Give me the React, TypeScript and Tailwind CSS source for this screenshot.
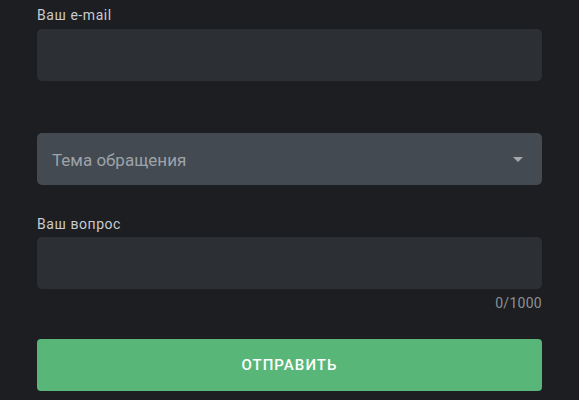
export default function App() {
  return (
    <div className="min-h-[400px] w-full bg-[#1d1e22] px-[37px] pt-[5px] font-['Roboto','Liberation_Sans',sans-serif] overflow-hidden">
      <label className="block text-[14px] leading-[20px] text-[#c9cbce] tracking-[0.04em]">Ваш e-mail</label>
      <div className="mt-[4px] h-[52px] w-full rounded-[5px] bg-[#2c3034]" />

      <div className="mt-[52px] flex h-[52px] w-full items-center justify-between rounded-[5px] bg-[#434a52] pl-[15px] pr-[19px]">
        <span className="pt-[3px] text-[17px] text-[#9ea3a9]">Тема обращения</span>
        <svg width="10" height="5" viewBox="0 0 10 5">
          <path d="M0 0h10L5 5z" fill="#a3a8ad" />
        </svg>
      </div>

      <label className="mt-[29px] block text-[14px] leading-[20px] text-[#c9cbce] tracking-[0.04em]">Ваш вопрос</label>
      <div className="mt-[3px] h-[52px] w-full rounded-[5px] bg-[#2c3034]" />
      <div className="mt-[4px] text-right text-[14px] leading-[20px] tracking-[0.02em] text-[#8c9095]">0/1000</div>

      <button className="mt-[26px] flex h-[52px] w-full items-center justify-center rounded-[4px] bg-[#58b778] text-[15px] font-medium tracking-[0.07em] text-white">
        ОТПРАВИТЬ
      </button>
    </div>
  );
}
